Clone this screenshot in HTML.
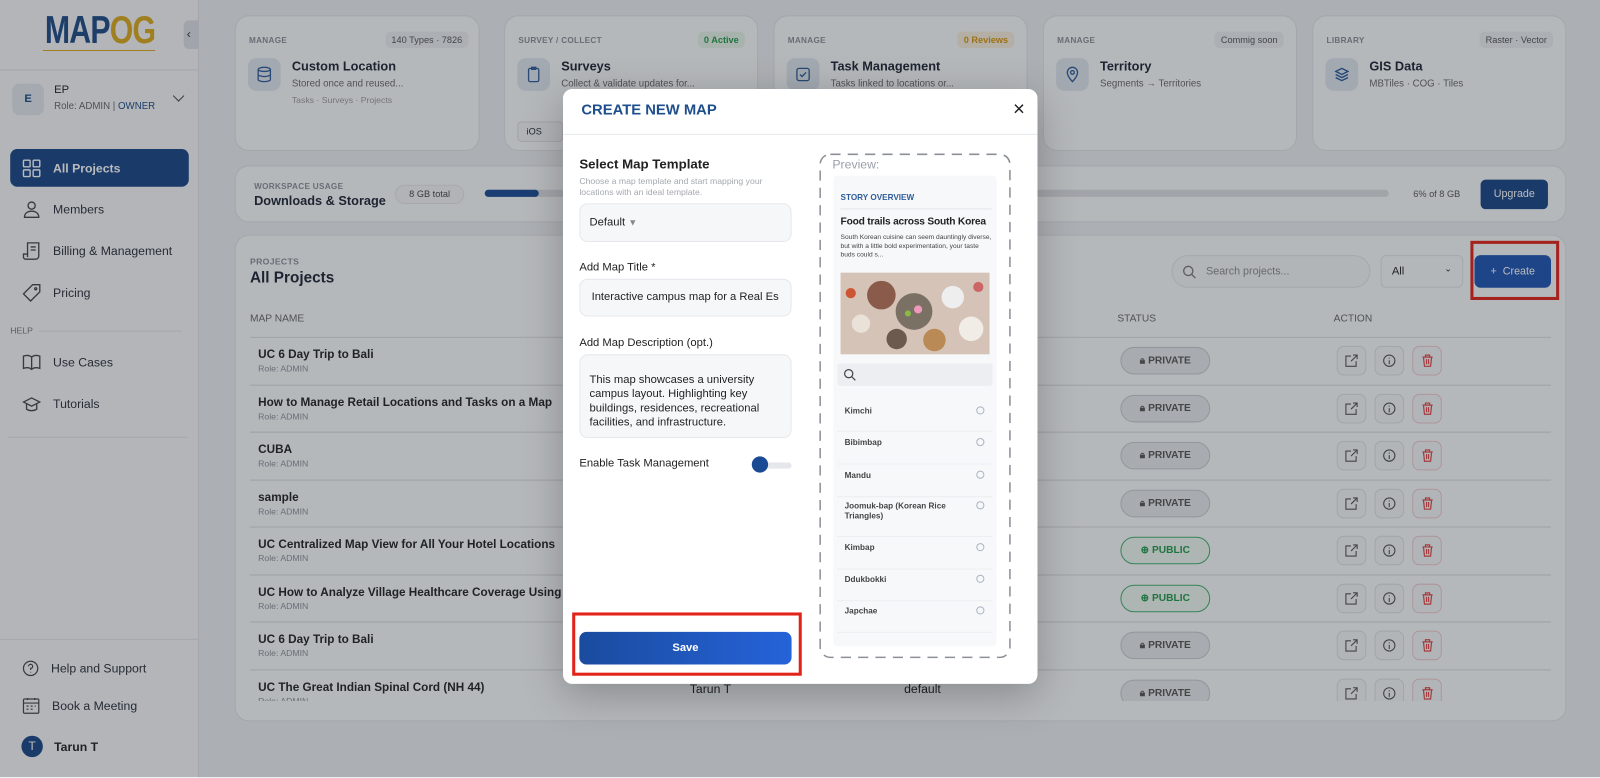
<!DOCTYPE html>
<html><head><meta charset="utf-8"><style>
*{box-sizing:border-box;margin:0;padding:0}
html,body{width:1600px;height:777px;overflow:hidden}
body{background:#eceef1;font-family:"Liberation Sans",sans-serif;color:#1d2433}
#w{position:absolute;left:0;top:0;width:1568px;height:762px;transform:scale(1.0204);transform-origin:0 0}
.a{position:absolute}
.side{left:0;top:0;width:195px;height:762px;background:#f6f7f9;border-right:1px solid #e1e3e7}
.card{background:#fafbfc;border:1px solid #e0e2e6;border-radius:14px}
.lbl{font-size:8px;font-weight:bold;color:#8a8f98;letter-spacing:.3px}
.pill{font-size:9px;color:#555;background:#eceef1;border-radius:5px;padding:3px 6px}
.ic{width:32px;height:32px;border-radius:8px;background:#dfe5ee;display:flex;align-items:center;justify-content:center}
.nav{left:10px;width:175px;height:37px;border-radius:7px;display:flex;align-items:center;padding-left:12px;font-size:12px;color:#2a2f3a}
.nav svg{margin-right:12px}
.rn{position:absolute;left:8px;font-size:11.5px;font-weight:bold;color:#222}
.rr{position:absolute;left:8px;font-size:8.5px;color:#8a8f98}
.st{position:absolute;width:88px;height:27px;border-radius:14px;border:1px solid #c7cace;background:#e6e8eb;font-size:10px;font-weight:bold;color:#555;display:flex;align-items:center;justify-content:center;gap:5px}
.st.pub{border-color:#41b06a;background:#eef8f1;color:#22994a}
.ab{position:absolute;width:29px;height:29px;border-radius:7px;border:1px solid #dcdfe3;background:#f5f6f8;display:flex;align-items:center;justify-content:center}
.ov{left:0;top:0;width:1600px;height:777px;background:rgba(30,34,42,.31)}
.modal{left:563px;top:89px;width:465px;height:583px;background:#fff;border-radius:9px;box-shadow:0 10px 40px rgba(0,0,0,.25);transform:scale(1.0204);transform-origin:0 0}
.inp{position:absolute;left:16px;width:208px;background:#f6f7f9;border:1px solid #e6e8ec;border-radius:8px;font-size:11px;color:#222}
.ml{position:absolute;left:16px;font-size:11px;color:#222}
.li{position:absolute;left:4px;width:152px;border-bottom:1px solid #eceef1;font-size:8px;font-weight:bold;color:#444;padding-left:7px}
.li:after{content:"";position:absolute;right:8px;top:0;width:6px;height:6px;border:1.5px solid #aab3c3;border-radius:50%}
</style></head><body>
<div id="w">
<div class="a side">
  <div class="a" style="left:44px;top:9px;font-size:38px;font-weight:bold;letter-spacing:-1px;color:#1c4a86;transform:scaleX(.78);transform-origin:0 0">MAP<span style="color:#d9a91b">OG</span></div>
  <div class="a" style="left:42px;top:49px;width:110px;height:1px;background:#d9a91b"></div>
  <div class="a" style="left:180px;top:20px;width:15px;height:28px;background:#dde0e5;border-radius:5px 0 0 5px;font-size:12px;color:#333;padding:6px 3px">&#8249;</div>
  <div class="a" style="left:0;top:68px;width:195px;height:1px;background:#dfe2e6"></div>
  <div class="a" style="left:12px;top:82px;width:31px;height:31px;border-radius:7px;background:#e3e7ee;font-size:11px;font-weight:bold;color:#1c4a86;text-align:center;line-height:31px">E</div>
  <div class="a" style="left:53px;top:82px;font-size:11px;color:#222">EP</div>
  <div class="a" style="left:53px;top:99px;font-size:9.5px;color:#666">Role: ADMIN | <span style="color:#1c4a86">OWNER</span></div>
  <div class="a" style="left:171px;top:90px;width:8px;height:8px;border-right:1.5px solid #444;border-bottom:1.5px solid #444;transform:rotate(45deg)"></div>
  <div class="a nav" style="top:146px;background:#1a4587;color:#fff;font-weight:bold"><svg width="18" height="18" viewBox="0 0 18 18" fill="none" stroke="#fff" stroke-width="1.4"><rect x="1" y="1" width="6.5" height="6.5" rx="1"/><rect x="10.5" y="1" width="6.5" height="6.5" rx="1"/><rect x="1" y="10.5" width="6.5" height="6.5" rx="1"/><rect x="10.5" y="10.5" width="6.5" height="6.5" rx="1"/></svg>All Projects</div>
  <div class="a nav" style="top:186px"><svg width="18" height="18" viewBox="0 0 18 18" fill="none" stroke="#444" stroke-width="1.3"><circle cx="9" cy="5.5" r="3.5"/><path d="M2 17c0-4 3-6 7-6s7 2 7 6z"/></svg>Members</div>
  <div class="a nav" style="top:227px"><svg width="18" height="18" viewBox="0 0 18 18" fill="none" stroke="#444" stroke-width="1.3"><path d="M5 1h11v13a3 3 0 0 1-3 3H3a2 2 0 0 1-2-2v-3h4zM8 5h5M8 8h5M5 12v3"/></svg>Billing &amp; Management</div>
  <div class="a nav" style="top:268px"><svg width="18" height="18" viewBox="0 0 18 18" fill="none" stroke="#444" stroke-width="1.3"><path d="M10 1h7v7L8 17 1 10z"/><circle cx="13" cy="5" r="1"/></svg>Pricing</div>
  <div class="a" style="left:10px;top:319px;font-size:8.5px;color:#777">HELP</div>
  <div class="a" style="left:38px;top:324px;width:140px;height:1px;background:#dfe2e6"></div>
  <div class="a nav" style="top:336px"><svg width="18" height="18" viewBox="0 0 18 18" fill="none" stroke="#444" stroke-width="1.3"><path d="M1 3c3-1 6-1 8 1 2-2 5-2 8-1v12c-3-1-6-1-8 1-2-2-5-2-8-1zM9 4v12"/></svg>Use Cases</div>
  <div class="a nav" style="top:377px"><svg width="18" height="18" viewBox="0 0 18 18" fill="none" stroke="#444" stroke-width="1.3"><path d="M1 7l8-4 8 4-8 4zM4 9v5c3 2 7 2 10 0V9"/></svg>Tutorials</div>
  <div class="a" style="left:8px;top:428px;width:176px;height:1px;background:#dfe2e6"></div>
  <div class="a" style="left:0;top:626px;width:195px;height:1px;background:#dfe2e6"></div>
  <div class="a nav" style="top:636px"><svg width="16" height="16" viewBox="0 0 16 16" fill="none" stroke="#444" stroke-width="1.2"><circle cx="8" cy="8" r="7"/><path d="M6 6a2 2 0 1 1 2 2v1.5M8 11.5v.5"/></svg>Help and Support</div>
  <div class="a nav" style="top:673px"><svg width="17" height="17" viewBox="0 0 17 17" fill="none" stroke="#444" stroke-width="1.2"><rect x="1" y="2" width="15" height="14" rx="1"/><path d="M1 6h15M5 1v2M12 1v2M4 9h2M8 9h2M12 9h1M4 12h2M8 12h2"/></svg>Book a Meeting</div>
  <div class="a" style="left:21px;top:721px;width:21px;height:21px;border-radius:50%;background:#1a4587;color:#fff;font-size:12px;text-align:center;line-height:21px">T</div>
  <div class="a" style="left:53px;top:725px;font-size:12px;font-weight:bold;color:#222">Tarun T</div>
</div>

<div class="a card" style="left:230px;top:15px;width:240px;height:133px">
  <div class="a lbl" style="left:13px;top:19px">MANAGE</div><div class="a pill" style="right:10px;top:15px">140 Types · 7826</div>
  <div class="a ic" style="left:12px;top:41px"><svg width="14" height="16" viewBox="0 0 14 16" fill="none" stroke="#2f5c99" stroke-width="1.3"><ellipse cx="7" cy="3" rx="6" ry="2"/><path d="M1 3v10c0 1 3 2 6 2s6-1 6-2V3M1 8c0 1 3 2 6 2s6-1 6-2"/></svg></div>
  <div class="a" style="left:55px;top:42px;font-size:12.5px;font-weight:bold">Custom Location</div>
  <div class="a" style="left:55px;top:61px;font-size:9.5px;color:#666">Stored once and reused...</div>
  <div class="a" style="left:55px;top:77px;font-size:8.5px;color:#999">Tasks · Surveys · Projects</div>
</div>
<div class="a card" style="left:494px;top:15px;width:249px;height:133px">
  <div class="a lbl" style="left:13px;top:19px">SURVEY / COLLECT</div><div class="a pill" style="right:12px;top:15px;color:#22994a;font-weight:bold;background:#e6f3ea">0 Active</div>
  <div class="a ic" style="left:12px;top:41px"><svg width="12" height="16" viewBox="0 0 12 16" fill="none" stroke="#2f5c99" stroke-width="1.3"><rect x="1" y="2" width="10" height="13" rx="1.5"/><path d="M4 1h4v2H4z"/></svg></div>
  <div class="a" style="left:55px;top:42px;font-size:12.5px;font-weight:bold">Surveys</div>
  <div class="a" style="left:55px;top:61px;font-size:9.5px;color:#666">Collect &amp; validate updates for...</div>
  <div class="a" style="left:12px;top:103px;width:45px;height:20px;border:1px solid #ddd;border-radius:4px;font-size:9px;padding:4px 8px;background:#f3f4f6">iOS</div>
</div>
<div class="a card" style="left:758px;top:15px;width:249px;height:133px">
  <div class="a lbl" style="left:13px;top:19px">MANAGE</div><div class="a pill" style="right:12px;top:15px;color:#d69411;font-weight:bold;background:#f6eedc">0 Reviews</div>
  <div class="a ic" style="left:12px;top:41px"><svg width="14" height="14" viewBox="0 0 14 14" fill="none" stroke="#2f5c99" stroke-width="1.3"><rect x="1" y="1" width="12" height="12" rx="2"/><path d="M4 7l2 2 4-4"/></svg></div>
  <div class="a" style="left:55px;top:42px;font-size:12.5px;font-weight:bold">Task Management</div>
  <div class="a" style="left:55px;top:61px;font-size:9.5px;color:#666">Tasks linked to locations or...</div>
</div>
<div class="a card" style="left:1022px;top:15px;width:249px;height:133px">
  <div class="a lbl" style="left:13px;top:19px">MANAGE</div><div class="a pill" style="right:12px;top:15px">Commig soon</div>
  <div class="a ic" style="left:12px;top:41px"><svg width="12" height="16" viewBox="0 0 12 16" fill="none" stroke="#2f5c99" stroke-width="1.3"><path d="M6 15s5-5 5-9A5 5 0 0 0 1 6c0 4 5 9 5 9z"/><circle cx="6" cy="6" r="1.8"/></svg></div>
  <div class="a" style="left:55px;top:42px;font-size:12.5px;font-weight:bold">Territory</div>
  <div class="a" style="left:55px;top:61px;font-size:9.5px;color:#666">Segments → Territories</div>
</div>
<div class="a card" style="left:1286px;top:15px;width:249px;height:133px">
  <div class="a lbl" style="left:13px;top:19px">LIBRARY</div><div class="a pill" style="right:12px;top:15px">Raster · Vector</div>
  <div class="a ic" style="left:12px;top:41px"><svg width="14" height="14" viewBox="0 0 14 14" fill="none" stroke="#2f5c99" stroke-width="1.4"><path d="M7 1l6 3-6 3-6-3zM1 7l6 3 6-3M1 10l6 3 6-3"/></svg></div>
  <div class="a" style="left:55px;top:42px;font-size:12.5px;font-weight:bold">GIS Data</div>
  <div class="a" style="left:55px;top:61px;font-size:9.5px;color:#666">MBTiles · COG · Tiles</div>
</div>

<div class="a card" style="left:230px;top:162px;width:1305px;height:56px">
  <div class="a lbl" style="left:18px;top:15px">WORKSPACE USAGE</div>
  <div class="a" style="left:18px;top:27px;font-size:12.5px;font-weight:bold">Downloads &amp; Storage</div>
  <div class="a" style="left:156px;top:18px;width:68px;height:19px;border-radius:10px;border:1px solid #e3e5e9;background:#f3f4f6;font-size:9px;color:#444;text-align:center;line-height:17px">8 GB total</div>
  <div class="a" style="left:244px;top:23px;width:886px;height:7px;border-radius:4px;background:#dcdee2"><div style="width:53px;height:7px;border-radius:4px;background:#1a4a94"></div></div>
  <div class="a" style="left:1154px;top:22px;font-size:9px;color:#555">6% of 8 GB</div>
  <div class="a" style="left:1220px;top:13px;width:66px;height:29px;border-radius:5px;background:#1a4587;color:#fff;font-size:10.5px;text-align:center;line-height:29px">Upgrade</div>
</div>

<div class="a card" style="left:230px;top:230px;width:1305px;height:477px"></div>
<div class="a lbl" style="left:245px;top:251px;font-size:8.5px">PROJECTS</div>
<div class="a" style="left:245px;top:264px;font-size:15px;font-weight:bold">All Projects</div>
<div class="a" style="left:1148px;top:250px;width:195px;height:32px;border-radius:16px;border:1px solid #e1e3e7;background:#f5f6f8;font-size:10.5px;color:#888;padding:9px 0 0 33px">Search projects...</div>
<svg class="a" style="left:1159px;top:260px" width="13" height="13" viewBox="0 0 13 13" fill="none" stroke="#777" stroke-width="1.3"><circle cx="5.5" cy="5.5" r="4.5"/><path d="M9 9l3.5 3.5"/></svg>
<div class="a" style="left:1353px;top:250px;width:81px;height:32px;border-radius:5px;border:1px solid #e1e3e7;background:#f8f9fa;font-size:11px;color:#222;padding:9px 10px">All<span style="position:absolute;right:10px;top:7px;font-size:9px">&#8964;</span></div>
<div class="a" style="left:1445px;top:250px;width:75px;height:32px;border-radius:6px;background:#1f55b3;color:#fff;font-size:10.5px;text-align:center;line-height:32px">+&nbsp; Create</div>
<div class="a" style="left:1441px;top:236px;width:87px;height:58px;border:3px solid #e2231a"></div>
<div class="a" style="left:245px;top:307px;font-size:10px;color:#666">MAP NAME</div>
<div class="a" style="left:1095px;top:307px;font-size:10px;color:#666">STATUS</div>
<div class="a" style="left:1307px;top:307px;font-size:10px;color:#666">ACTION</div>
<div class="a" id="tbl" style="left:245px;top:330px;width:1280px;height:357px;overflow:hidden"></div>
</div>

<div class="a ov"></div>

<div class="a modal">
  <div class="a" style="left:18px;top:13px;font-size:14.5px;font-weight:bold;color:#1f4e8c">CREATE NEW MAP</div>
  <div class="a" style="left:441px;top:9px;font-size:20px;color:#222">&#215;</div>
  <div class="a" style="left:0;top:44px;width:465px;height:1px;background:#e7e9ec"></div>
  <div class="ml" style="top:66px;font-size:13px;font-weight:bold">Select Map Template</div>
  <div class="ml" style="top:85px;font-size:8.5px;color:#a4a8ae;line-height:11px;width:215px">Choose a map template and start mapping your locations with an ideal template.</div>
  <div class="inp" style="top:112px;height:38px;padding:12px 9px">Default <span style="color:#888;font-size:9px">&#9660;</span></div>
  <div class="ml" style="top:169px">Add Map Title *</div>
  <div class="inp" style="top:186px;height:37px;padding:11px 11px;white-space:nowrap;overflow:hidden">Interactive campus map for a Real Es</div>
  <div class="ml" style="top:243px">Add Map Description (opt.)</div>
  <div class="inp" style="top:260px;height:82px;padding:17px 9px;line-height:14px">This map showcases a university campus layout. Highlighting key buildings, residences, recreational facilities, and infrastructure.</div>
  <div class="ml" style="top:361px">Enable Task Management</div>
  <div class="a" style="left:186px;top:366px;width:38px;height:6px;border-radius:3px;background:#e5e7ea"></div>
  <div class="a" style="left:185px;top:360px;width:16px;height:16px;border-radius:50%;background:#1a4a94"></div>
  <div class="a" style="left:16px;top:532px;width:208px;height:32px;border-radius:7px;background:linear-gradient(90deg,#1a4b9e,#2563d9);color:#fff;font-size:11px;font-weight:bold;text-align:center;line-height:32px">Save</div>
  <div class="a" style="left:9px;top:513px;width:225px;height:62px;border:3px solid #e2231a"></div>
  <svg class="a" style="left:251px;top:63px" width="188" height="495"><rect x="1" y="1" width="186" height="493" rx="10" fill="none" stroke="#8b8f96" stroke-width="1.5" stroke-dasharray="10 7"/></svg>
  <div class="a" style="left:264px;top:67px;font-size:12px;color:#9aa0a8">Preview:</div>
  <div class="a" style="left:265px;top:85px;width:160px;height:461px;background:#f7f8fa;border-radius:4px">
    <div class="a" style="left:7px;top:17px;font-size:8px;font-weight:bold;color:#2f5c99">STORY OVERVIEW</div>
    <div class="a" style="left:7px;top:32px;width:148px;height:1px;background:#e4e6ea"></div>
    <div class="a" style="left:7px;top:40px;font-size:10px;font-weight:bold;color:#222;white-space:nowrap;letter-spacing:-.2px">Food trails across South Korea</div>
    <div class="a" style="left:7px;top:57px;width:150px;font-size:6.5px;line-height:8.5px;color:#444">South Korean cuisine can seem dauntingly diverse, but with a little bold experimentation, your taste buds could s...</div>
    <div class="a" style="left:7px;top:95px;width:146px;height:80px;background:#d4c3b6;overflow:hidden">
      <svg width="146" height="80"><circle cx="40" cy="22" r="14" fill="#8a5a4a"/><circle cx="72" cy="38" r="18" fill="#7a7064"/><circle cx="110" cy="24" r="11" fill="#eee"/><circle cx="20" cy="50" r="9" fill="#eae2d8"/><circle cx="128" cy="55" r="12" fill="#f1ece6"/><circle cx="55" cy="65" r="10" fill="#6c5a4e"/><circle cx="92" cy="66" r="11" fill="#b98a55"/><circle cx="10" cy="20" r="5" fill="#c53"/><circle cx="135" cy="14" r="5" fill="#c66"/><circle cx="76" cy="36" r="4" fill="#e9b"/><circle cx="66" cy="40" r="3" fill="#8b4"/></svg>
    </div>
    <div class="a" style="left:4px;top:184px;width:152px;height:22px;background:#eceef1;border-radius:3px"></div>
    <svg class="a" style="left:10px;top:189px" width="12" height="12" viewBox="0 0 12 12" fill="none" stroke="#444" stroke-width="1.2"><circle cx="5" cy="5" r="4"/><path d="M8 8l3.5 3.5"/></svg>
    <div class="li" style="top:226px;height:25px">Kimchi</div>
    <div class="li" style="top:257px;height:26px">Bibimbap</div>
    <div class="li" style="top:289px;height:26px">Mandu</div>
    <div class="li" style="top:319px;height:35px;line-height:10px">Joomuk-bap (Korean Rice<br>Triangles)</div>
    <div class="li" style="top:360px;height:26px">Kimbap</div>
    <div class="li" style="top:391px;height:26px">Ddukbokki</div>
    <div class="li" style="top:422px;height:26px">Japchae</div>
  </div>
</div>
<script>
var names=["UC 6 Day Trip to Bali","How to Manage Retail Locations and Tasks on a Map","CUBA","sample","UC Centralized Map View for All Your Hotel Locations","UC How to Analyze Village Healthcare Coverage Using Maps","UC 6 Day Trip to Bali","UC The Great Indian Spinal Cord (NH 44)"];
var pub=[0,0,0,0,1,1,0,0];
var h="";
for(var i=0;i<8;i++){
 var t=i*46.5;
 h+='<div class="a" style="left:0;top:'+t+'px;width:1275px;height:1px;background:#d6d9dd"></div>'+
 '<div class="rn" style="top:'+(t+12)+'px">'+names[i]+'</div><div class="rr" style="top:'+(t+26)+'px">Role: ADMIN</div>'+
 '<div class="st'+(pub[i]?' pub':'')+'" style="left:853px;top:'+(t+10)+'px">'+(pub[i]?'&#8853; PUBLIC':'&#128274;&#xFE0E; PRIVATE')+'</div>'+
 '<div class="ab" style="left:1065px;top:'+(t+9)+'px"><svg width="13" height="13" viewBox="0 0 13 13" fill="none" stroke="#555" stroke-width="1.1"><path d="M6 2H1v10h10V7M8 1h4v4M12 1L6 7"/></svg></div>'+
 '<div class="ab" style="left:1102px;top:'+(t+9)+'px"><svg width="13" height="13" viewBox="0 0 13 13" fill="none" stroke="#555" stroke-width="1.1"><circle cx="6.5" cy="6.5" r="5.5"/><path d="M6.5 6v4M6.5 3.5v1"/></svg></div>'+
 '<div class="ab" style="left:1139px;top:'+(t+9)+'px;border-color:#eec9c9"><svg width="12" height="13" viewBox="0 0 12 13" fill="none" stroke="#e04848" stroke-width="1.2"><path d="M1 3h10M4 3V1h4v2M2 3l1 9h6l1-9M5 5v5M7 5v5"/></svg></div>';
}
h+='<div class="a" style="left:431px;top:'+(7*46.5+12)+'px;font-size:12px;color:#222">Tarun T</div><div class="a" style="left:641px;top:'+(7*46.5+12)+'px;font-size:12px;color:#222">default</div>';
document.getElementById('tbl').innerHTML=h;
</script>
</body></html>
